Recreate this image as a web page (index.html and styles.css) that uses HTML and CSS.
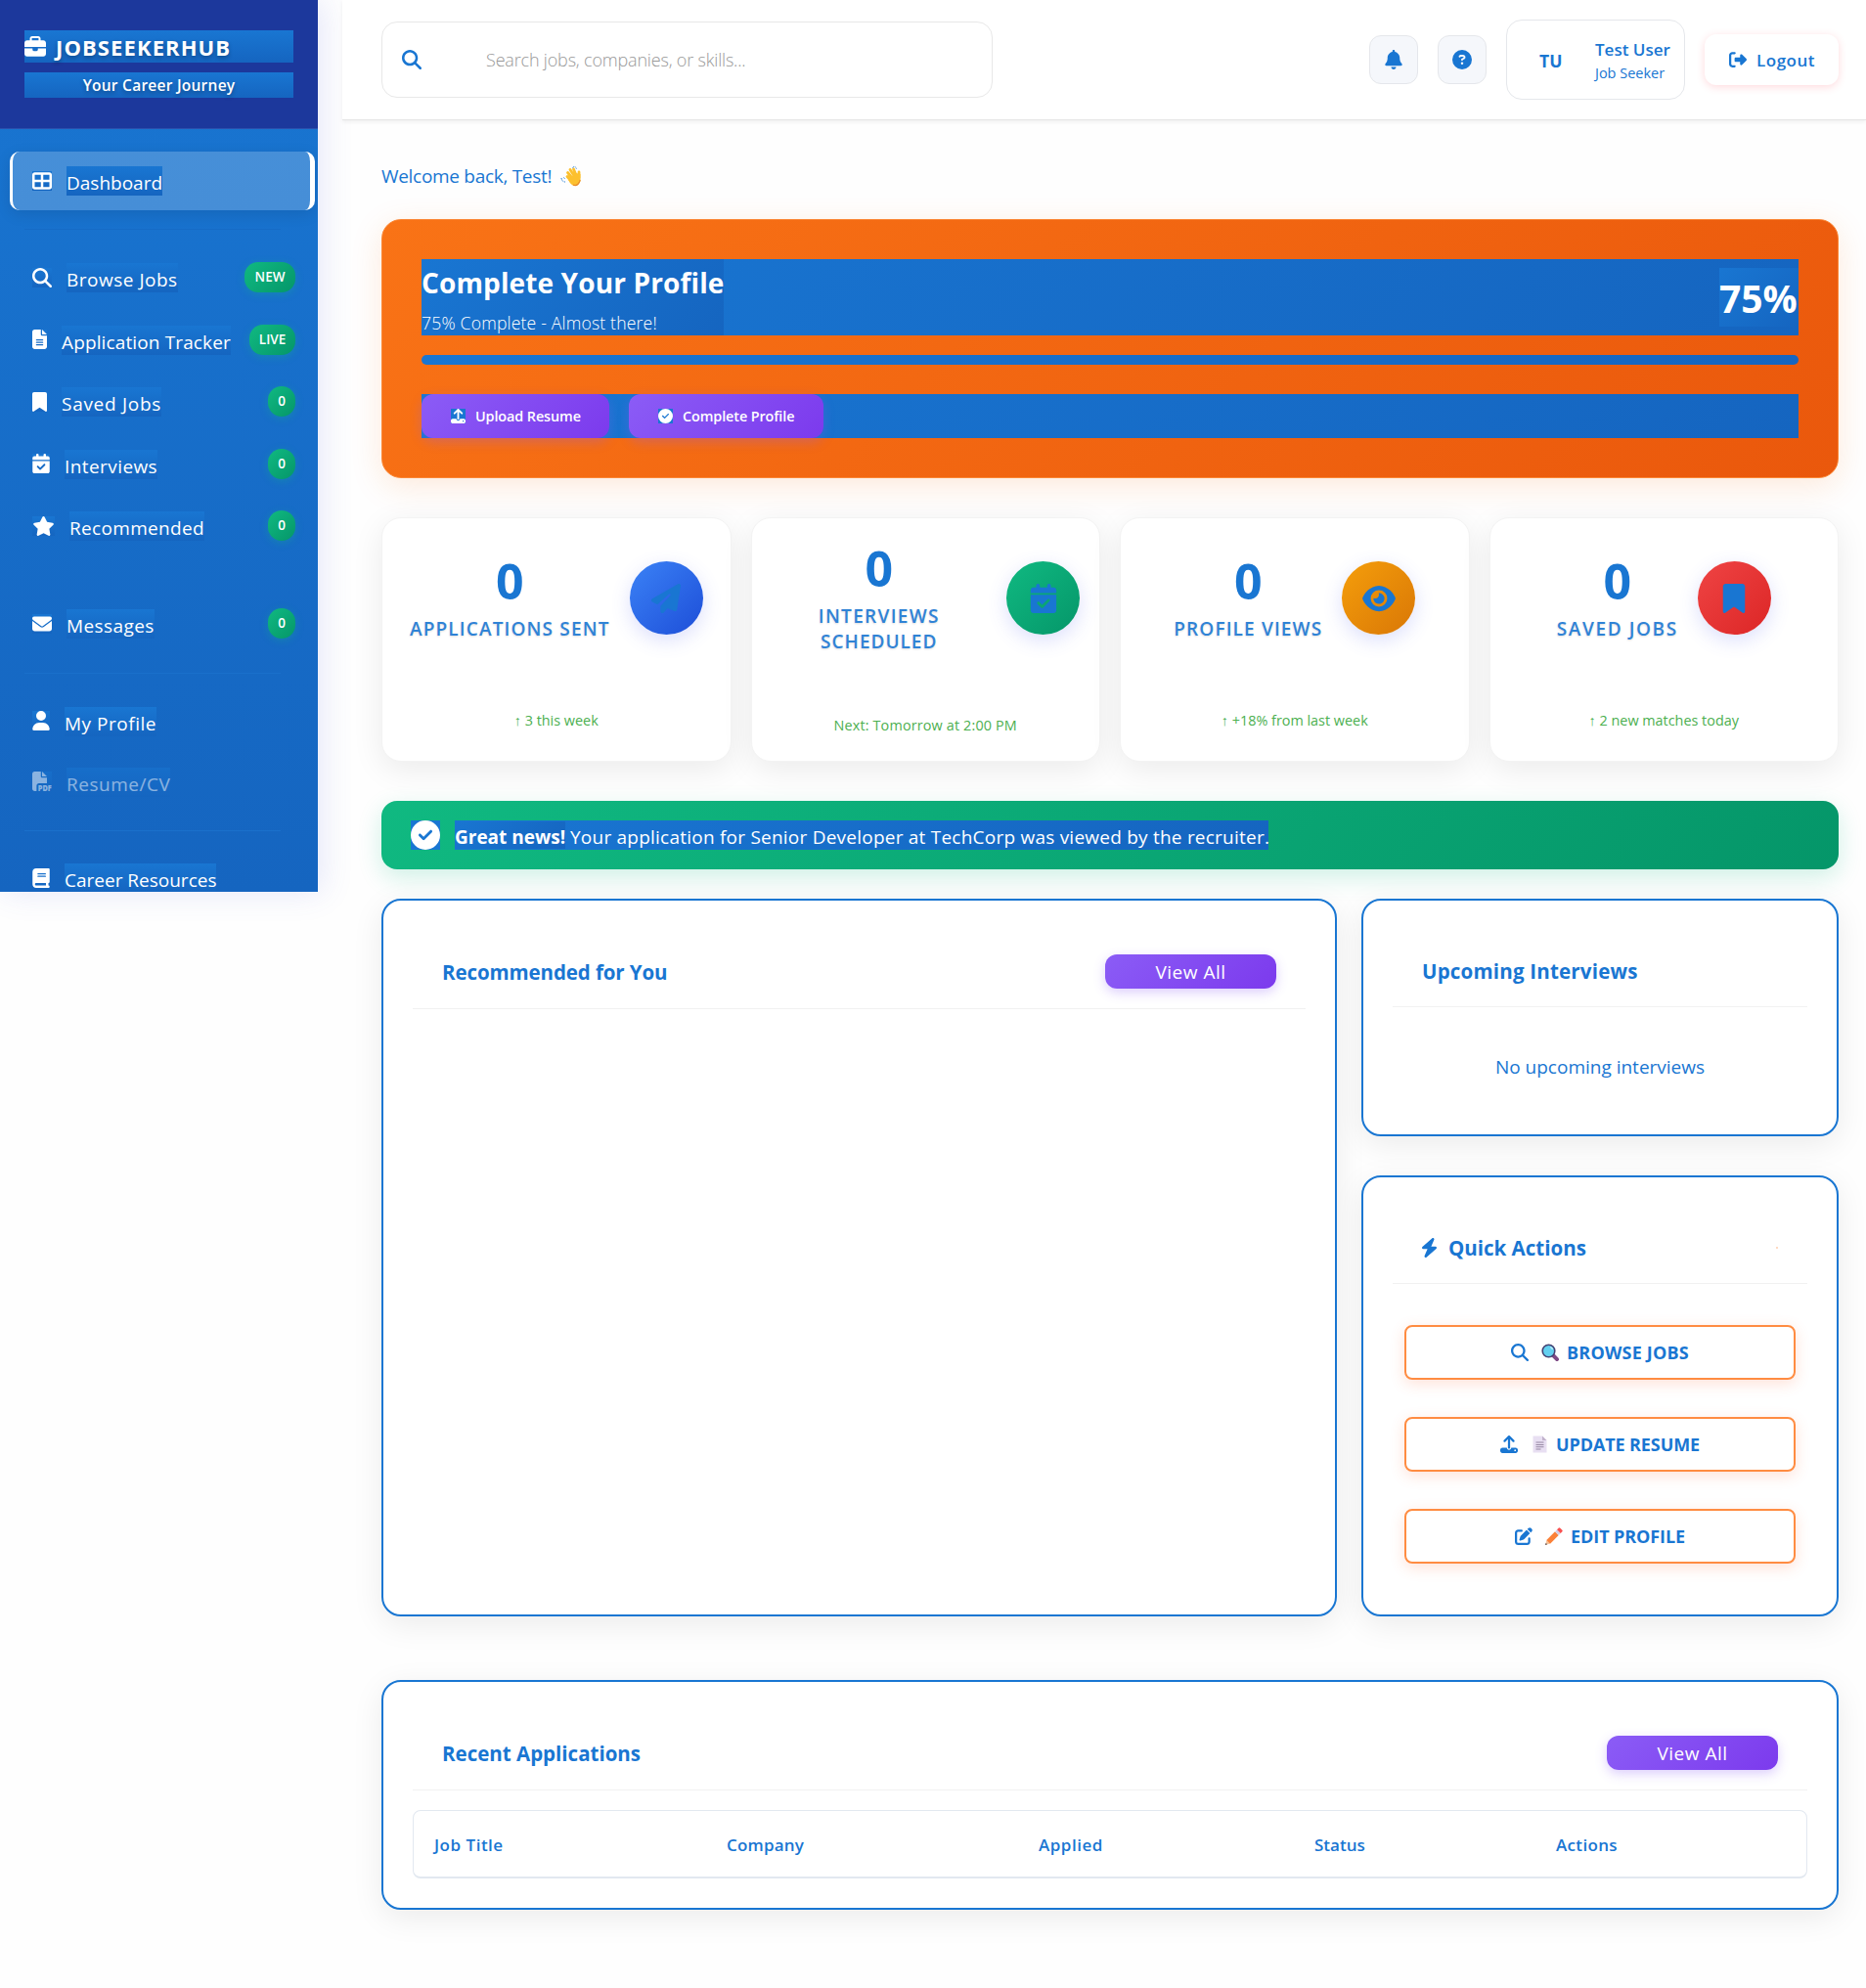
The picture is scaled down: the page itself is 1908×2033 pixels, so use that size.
FILE: index.html
```html
<!DOCTYPE html>
<html lang="en">
<head>
<meta charset="utf-8">
<title>JobSeekerHub – Dashboard</title>
<link rel="stylesheet" href="styles.css">
</head>
<body>
<svg width="0" height="0" class="sprite" aria-hidden="true">
  <symbol id="search" viewBox="0 0 512 512"><path d="M416 208c0 45.9-14.9 88.3-40 122.7L502.6 457.4c12.5 12.5 12.5 32.8 0 45.3s-32.8 12.5-45.3 0L330.7 376c-34.4 25.2-76.8 40-122.7 40C93.1 416 0 322.9 0 208S93.1 0 208 0S416 93.1 416 208zM208 352a144 144 0 1 0 0-288 144 144 0 1 0 0 288z"/></symbol>
  <symbol id="briefcase" viewBox="0 0 512 512"><path d="M184 48H328c4.4 0 8 3.6 8 8V96H176V56c0-4.4 3.6-8 8-8zm-56 8V96H64C28.7 96 0 124.7 0 160v96H192 320 512V160c0-35.3-28.7-64-64-64H384V56c0-30.9-25.1-56-56-56H184c-30.9 0-56 25.1-56 56zM512 288H320v32c0 17.7-14.3 32-32 32H224c-17.7 0-32-14.3-32-32V288H0V416c0 35.3 28.7 64 64 64H448c35.3 0 64-28.7 64-64V288z"/></symbol>
  <symbol id="grid" viewBox="0 0 512 512"><path d="M448 96V224H288V96H448zm0 192V416H288V288H448zM224 224H64V96H224V224zM64 288H224V416H64V288zM64 32C28.7 32 0 60.7 0 96V416c0 35.3 28.7 64 64 64H448c35.3 0 64-28.7 64-64V96c0-35.3-28.7-64-64-64H64z"/></symbol>
  <symbol id="file" viewBox="0 0 384 512"><path d="M64 0C28.7 0 0 28.7 0 64V448c0 35.3 28.7 64 64 64H320c35.3 0 64-28.7 64-64V160H256c-17.7 0-32-14.3-32-32V0H64zM256 0V128H384L256 0zM112 256H272c8.8 0 16 7.2 16 16s-7.2 16-16 16H112c-8.8 0-16-7.2-16-16s7.2-16 16-16zm0 64H272c8.8 0 16 7.2 16 16s-7.2 16-16 16H112c-8.8 0-16-7.2-16-16s7.2-16 16-16zm0 64H272c8.8 0 16 7.2 16 16s-7.2 16-16 16H112c-8.8 0-16-7.2-16-16s7.2-16 16-16z"/></symbol>
  <symbol id="bookmark" viewBox="0 0 384 512"><path d="M0 48V487.7C0 501.1 10.9 512 24.3 512c5 0 9.9-1.5 14-4.4L192 400 345.7 507.6c4.1 2.9 9 4.4 14 4.4c13.4 0 24.3-10.9 24.3-24.3V48c0-26.5-21.5-48-48-48H48C21.5 0 0 21.5 0 48z"/></symbol>
  <symbol id="calendar" viewBox="0 0 448 512"><path d="M128 0c17.7 0 32 14.3 32 32V64H288V32c0-17.7 14.3-32 32-32s32 14.3 32 32V64h48c26.5 0 48 21.5 48 48v48H0V112C0 85.5 21.5 64 48 64H96V32c0-17.7 14.3-32 32-32zM0 192H448V464c0 26.5-21.5 48-48 48H48c-26.5 0-48-21.5-48-48V192zM329 305c9.4-9.4 9.4-24.6 0-33.9s-24.6-9.4-33.9 0l-95 95-47-47c-9.4-9.4-24.6-9.4-33.9 0s-9.4 24.6 0 33.9l64 64c9.4 9.4 24.6 9.4 33.9 0L329 305z"/></symbol>
  <symbol id="star" viewBox="0 0 576 512"><path d="M316.9 18C311.6 7 300.4 0 288.1 0s-23.4 7-28.8 18L195 150.3 51.4 171.5c-12 1.8-22 10.2-25.7 21.7s-.7 24.2 7.9 32.7L137.8 329 113.2 474.7c-2 12 3 24.2 12.9 31.3s23 8 33.8 2.3l128.3-68.5 128.3 68.5c10.8 5.7 23.9 4.9 33.8-2.3s14.9-19.3 12.9-31.3L438.5 329 542.7 225.9c8.6-8.5 11.7-21.2 7.9-32.7s-13.7-19.9-25.7-21.7L381.2 150.3 316.9 18z"/></symbol>
  <symbol id="envelope" viewBox="0 0 512 512"><path d="M48 64C21.5 64 0 85.5 0 112c0 15.1 7.1 29.3 19.2 38.4L236.8 313.6c11.4 8.5 27 8.5 38.4 0L492.8 150.4c12.1-9.1 19.2-23.3 19.2-38.4c0-26.5-21.5-48-48-48H48zM0 176V384c0 35.3 28.7 64 64 64H448c35.3 0 64-28.7 64-64V176L294.4 339.2c-22.8 17.1-54 17.1-76.8 0L0 176z"/></symbol>
  <symbol id="user" viewBox="0 0 448 512"><path d="M224 256A128 128 0 1 0 224 0a128 128 0 1 0 0 256zm-45.7 48C79.8 304 0 383.8 0 482.3C0 498.7 13.3 512 29.7 512H418.3c16.4 0 29.7-13.3 29.7-29.7C448 383.8 368.2 304 269.7 304H178.3z"/></symbol>
  <symbol id="pdf" viewBox="0 0 512 512"><path d="M0 64C0 28.7 28.7 0 64 0H224V128c0 17.7 14.3 32 32 32H384V304H176c-35.3 0-64 28.7-64 64V512H64c-35.3 0-64-28.7-64-64V64zm384 64H256V0L384 128z"/><text x="148" y="508" textLength="356" lengthAdjust="spacingAndGlyphs" font-family="Open Sans, sans-serif" font-weight="800" font-size="205">PDF</text></symbol>
  <symbol id="book" viewBox="0 0 448 512"><path d="M96 0C43 0 0 43 0 96V416c0 53 43 96 96 96H384h32c17.7 0 32-14.3 32-32s-14.3-32-32-32V384c17.7 0 32-14.3 32-32V32c0-17.7-14.3-32-32-32H384 96zm0 384H352v64H96c-17.7 0-32-14.3-32-32s14.3-32 32-32zm32-240c0-8.8 7.2-16 16-16H336c8.8 0 16 7.2 16 16s-7.2 16-16 16H144c-8.8 0-16-7.2-16-16zm16 48H336c8.8 0 16 7.2 16 16s-7.2 16-16 16H144c-8.8 0-16-7.2-16-16s7.2-16 16-16z"/></symbol>
  <symbol id="bell" viewBox="0 0 448 512"><path d="M224 0c-17.7 0-32 14.3-32 32V51.2C119 66 64 130.6 64 208v18.8c0 47-17.3 92.4-48.5 127.6l-7.4 8.3c-8.4 9.4-10.4 22.9-5.3 34.4S19.4 416 32 416H416c12.6 0 24-7.4 29.2-18.9s3.1-25-5.3-34.4l-7.4-8.3C401.3 319.2 384 273.9 384 226.8V208c0-77.4-55-142-128-156.8V32c0-17.7-14.3-32-32-32zm45.3 493.3c12-12 18.7-28.3 18.7-45.3H224 160c0 17 6.7 33.3 18.7 45.3s28.3 18.7 45.3 18.7s33.3-6.7 45.3-18.7z"/></symbol>
  <symbol id="question" viewBox="0 0 512 512"><path d="M256 512A256 256 0 1 0 256 0a256 256 0 1 0 0 512zM169.8 165.3c7.9-22.3 29.1-37.3 52.8-37.3h58.3c34.9 0 63.1 28.3 63.1 63.1c0 22.6-12.1 43.5-31.7 54.8L280 264.4c-.2 13-10.9 23.6-24 23.6c-13.3 0-24-10.7-24-24V250.5c0-8.6 4.6-16.5 12.1-20.8l44.3-25.4c4.7-2.7 7.6-7.7 7.6-13.1c0-8.4-6.8-15.1-15.1-15.1H222.6c-3.4 0-6.4 2.1-7.5 5.3l-.4 1.2c-4.4 12.5-18.2 19-30.6 14.6s-19-18.2-14.6-30.6l.4-1.2zM224 352a32 32 0 1 1 64 0 32 32 0 1 1 -64 0z"/></symbol>
  <symbol id="logout" viewBox="0 0 512 512"><path d="M377.9 105.9L500.7 228.7c7.2 7.2 11.3 17.1 11.3 27.3s-4.1 20.1-11.3 27.3L377.9 406.1c-6.4 6.4-15 9.9-24 9.9c-18.7 0-33.9-15.2-33.9-33.9l0-62.1-128 0c-17.7 0-32-14.3-32-32l0-64c0-17.7 14.3-32 32-32l128 0 0-62.1c0-18.7 15.2-33.9 33.9-33.9c9 0 17.6 3.6 24 9.9zM160 96L96 96c-17.7 0-32 14.3-32 32l0 256c0 17.7 14.3 32 32 32l64 0c17.7 0 32 14.3 32 32s-14.3 32-32 32l-64 0c-53 0-96-43-96-96L0 128C0 75 43 32 96 32l64 0c17.7 0 32 14.3 32 32s-14.3 32-32 32z"/></symbol>
  <symbol id="check" viewBox="0 0 512 512"><path d="M256 512A256 256 0 1 0 256 0a256 256 0 1 0 0 512zM369 209L241 337c-9.4 9.4-24.6 9.4-33.9 0l-64-64c-9.4-9.4-9.4-24.6 0-33.9s24.6-9.4 33.9 0l47 47L335 175c9.4-9.4 24.6-9.4 33.9 0s9.4 24.6 0 33.9z"/></symbol>
  <symbol id="upload" viewBox="0 0 512 512"><path d="M288 109.3V352c0 17.7-14.3 32-32 32s-32-14.3-32-32V109.3l-73.4 73.4c-12.5 12.5-32.8 12.5-45.3 0s-12.5-32.8 0-45.3l128-128c12.5-12.5 32.8-12.5 45.3 0l128 128c12.5 12.5 12.5 32.8 0 45.3s-32.8 12.5-45.3 0L288 109.3zM64 352H192c0 35.3 28.7 64 64 64s64-28.7 64-64H448c35.3 0 64 28.7 64 64v32c0 35.3-28.7 64-64 64H64c-35.3 0-64-28.7-64-64V416c0-35.3 28.7-64 64-64zM432 456a24 24 0 1 0 0-48 24 24 0 1 0 0 48z"/></symbol>
  <symbol id="plane" viewBox="0 0 512 512"><path d="M498.1 5.6c10.1 7 15.4 19.1 13.5 31.2l-64 416c-1.5 9.7-7.4 18.2-16 23s-18.9 5.4-28 1.6L284 427.7l-68.5 74.1c-8.9 9.7-22.9 12.9-35.2 8.1S160 493.2 160 480V396.4c0-4 1.5-7.8 4.2-10.7L331.8 202.8c5.8-6.3 5.6-16-.4-22s-15.7-6.4-22-.7L106 360.8 17.7 316.6C7.1 311.3 .3 300.7 0 288.9s5.9-22.8 16.1-28.7l448-256c10.7-6.1 23.9-5.5 34 1.4z"/></symbol>
  <symbol id="eye" viewBox="0 0 576 512"><path d="M288 32c-80.8 0-145.5 36.8-192.6 80.6C48.6 156 17.3 208 2.5 243.7c-3.3 7.9-3.3 16.7 0 24.6C17.3 304 48.6 356 95.4 399.4C142.5 443.2 207.2 480 288 480s145.5-36.8 192.6-80.6c46.8-43.5 78.1-95.4 93-131.1c3.3-7.9 3.3-16.7 0-24.6c-14.9-35.7-46.2-87.7-93-131.1C433.5 68.8 368.8 32 288 32zM144 256a144 144 0 1 1 288 0 144 144 0 1 1 -288 0zm144-64c0 35.3-28.7 64-64 64c-7.1 0-13.9-1.2-20.3-3.3c-5.5-1.8-11.9 1.6-11.7 7.4c.3 6.9 1.3 13.8 3.2 20.7c13.7 51.2 66.4 81.6 117.6 67.9s81.6-66.4 67.9-117.6c-11.1-41.5-47.8-69.4-88.6-71.1c-5.8-.2-9.2 6.1-7.4 11.7c2.1 6.4 3.3 13.2 3.3 20.3z"/></symbol>
  <symbol id="bolt" viewBox="32 0 384 512"><path d="M349.4 44.6c5.9-13.7 1.5-29.7-10.6-38.5s-28.6-8-39.9 1.8l-256 224c-10 8.8-13.6 22.9-8.9 35.3S50.7 288 64 288H175.5L98.6 467.4c-5.9 13.7-1.5 29.7 10.6 38.5s28.6 8 39.9-1.8l256-224c10-8.8 13.6-22.9 8.9-35.3s-16.6-20.7-30-20.7H272.5L349.4 44.6z"/></symbol>
  <symbol id="edit" viewBox="0 0 512 512"><path d="M471.6 21.7c-21.9-21.9-57.3-21.9-79.2 0L362.3 51.7l97.9 97.9 30.1-30.1c21.9-21.9 21.9-57.3 0-79.2L471.6 21.7zm-299.2 220c-6.1 6.1-10.8 13.6-13.5 21.9l-29.6 88.8c-2.9 8.6-.6 18.1 5.8 24.6s15.9 8.7 24.6 5.8l88.8-29.6c8.2-2.7 15.7-7.4 21.9-13.5L437.7 172.3 339.7 74.3 172.4 241.7zM96 64C43 64 0 107 0 160V416c0 53 43 96 96 96H352c53 0 96-43 96-96V320c0-17.7-14.3-32-32-32s-32 14.3-32 32v96c0 17.7-14.3 32-32 32H96c-17.7 0-32-14.3-32-32V160c0-17.7 14.3-32 32-32h96c17.7 0 32-14.3 32-32s-14.3-32-32-32H96z"/></symbol>
</svg>

<aside class="sidebar">
  <div class="brand">
    <div class="brand-name"><svg class="i22"><use href="#briefcase"/></svg><span>JOBSEEKERHUB</span></div>
    <div class="brand-sub"><span>Your Career Journey</span></div>
  </div>
  <nav class="nav">
    <a class="item active"><svg class="w20"><use href="#grid"/></svg><span class="label">Dashboard</span></a>
    <hr class="rule dark">
    <a class="item badged"><svg class="w20"><use href="#search"/></svg><span class="label t5">Browse Jobs</span><b class="badge wide">NEW</b></a>
    <a class="item badged"><svg class="w15"><use href="#file"/></svg><span class="label t1">Application Tracker</span><b class="badge live">LIVE</b></a>
    <a class="item badged"><svg class="w15"><use href="#bookmark"/></svg><span class="label t7">Saved Jobs</span><b class="badge">0</b></a>
    <a class="item badged"><svg class="w18"><use href="#calendar"/></svg><span class="label t4">Interviews</span><b class="badge">0</b></a>
    <a class="item badged"><svg class="w23"><use href="#star"/></svg><span class="label t3">Recommended</span><b class="badge">0</b></a>
    <hr class="rule none">
    <a class="item badged"><svg class="w20"><use href="#envelope"/></svg><span class="label t4">Messages</span><b class="badge">0</b></a>
    <hr class="rule">
    <a class="item"><svg class="w18"><use href="#user"/></svg><span class="label t5">My Profile</span></a>
    <a class="item muted"><svg class="w20"><use href="#pdf"/></svg><span class="label t5">Resume/CV</span></a>
    <hr class="rule">
    <a class="item"><svg class="w18"><use href="#book"/></svg><span class="label">Career Resources</span></a>
  </nav>
</aside>

<div class="page">
  <header class="topbar">
    <div class="search"><svg class="i20"><use href="#search"/></svg><span class="placeholder">Search jobs, companies, or skills...</span></div>
    <div class="tools">
      <div class="tool"><svg class="i20"><use href="#bell"/></svg></div>
      <div class="tool"><svg class="i20"><use href="#question"/></svg></div>
      <div class="account">
        <div class="avatar">TU</div>
        <div class="who"><div class="who-name">Test User</div><div class="who-role">Job Seeker</div></div>
      </div>
      <div class="logout"><svg class="i18"><use href="#logout"/></svg><span class="t5">Logout</span></div>
    </div>
  </header>

  <main class="content">
    <div class="welcome"><span>Welcome back, Test!</span>
      <svg class="wave" viewBox="0 0 22 22"><path d="M12.5 2.500q3-2.500 4 1.500M14.500 4.500v3M1 13q.5 4 4 4M3.500 12.500l1.500 2" fill="none" stroke="#1976d2" stroke-width="1" stroke-dasharray="1.500 1"/><g fill="none" stroke="#fcc02e" stroke-width="2.800" stroke-linecap="round"><path d="M7 11.500l3.500 4M7.500 7.500l5 6M10 4.500l4.500 7M13.500 4l3 7"/><path d="M19 12.500V7"/></g><path d="M8 15l8-7 4.500 1v7q-1.500 5-5.500 5-4 0-7-6z" fill="#fcc02e"/><path d="M13 20q4 2 6.500-3l.7-2" fill="none" stroke="#e98b2c" stroke-width="1.200"/></svg>
    </div>

    <section class="banner">
      <div class="banner-head">
        <div class="banner-text"><div class="banner-title">Complete Your Profile</div><div class="banner-sub">75% Complete - Almost there!</div></div>
        <div class="banner-pct">75%</div>
      </div>
      <div class="progress"></div>
      <div class="banner-actions">
        <div class="pill"><svg class="i15"><use href="#upload"/></svg><span>Upload Resume</span></div>
        <div class="pill p2"><svg class="i15"><use href="#check"/></svg><span>Complete Profile</span></div>
      </div>
    </section>

    <section class="stats">
      <div class="stat"><div class="stat-row"><div class="stat-text"><div class="num">0</div><div class="cap">APPLICATIONS SENT</div></div><div class="disc blue"><svg class="i30"><use href="#plane"/></svg></div></div><div class="trend">↑ 3 this week</div></div>
      <div class="stat"><div class="stat-row"><div class="stat-text grow"><div class="num">0</div><div class="cap"><span class="t13">INTERVIEWS</span><br><span class="t10">SCHEDULED</span></div></div><div class="disc green"><svg class="i30"><use href="#calendar"/></svg></div></div><div class="trend lower">Next: Tomorrow at 2:00 PM</div></div>
      <div class="stat"><div class="stat-row"><div class="stat-text"><div class="num">0</div><div class="cap">PROFILE VIEWS</div></div><div class="disc amber"><svg class="i34"><use href="#eye"/></svg></div></div><div class="trend">↑ +18% from last week</div></div>
      <div class="stat"><div class="stat-row"><div class="stat-text"><div class="num">0</div><div class="cap t16">SAVED JOBS</div></div><div class="disc red"><svg class="i30"><use href="#bookmark"/></svg></div></div><div class="trend">↑ 2 new matches today</div></div>
    </section>

    <section class="alert"><div class="alert-icon"><svg class="i30"><use href="#check"/></svg></div><div class="alert-text"><strong>Great news!</strong><span class="rest">Your application for Senior Developer at TechCorp was viewed by the recruiter.</span></div></section>

    <section class="panels">
      <div class="card rec"><div class="card-head"><h3 class="tight">Recommended for You</h3><div class="view">View All</div></div></div>
      <div class="side">
        <div class="card upcoming"><div class="card-head"><h3 class="t2">Upcoming Interviews</h3></div><div class="empty">No upcoming interviews</div></div>
        <div class="card quick">
          <div class="card-head"><svg class="w15"><use href="#bolt"/></svg><h3>Quick Actions</h3><i class="dot"></i></div>
          <div class="actions">
            <div class="action"><svg class="i18"><use href="#search"/></svg><svg class="emoji" viewBox="0 0 18 18"><path d="M12.500 12.500l3.500 3.500" stroke="#7f4a86" stroke-width="4" stroke-linecap="square"/><circle cx="7.500" cy="7.500" r="6.300" fill="#63d0f0" stroke="#444273" stroke-width="1.600"/><path d="M9 3.500q2 .5 2.500 2.500" fill="none" stroke="#c9f2fb" stroke-width="1.200"/></svg><span class="t2">BROWSE JOBS</span></div>
            <div class="action"><svg class="i18"><use href="#upload"/></svg><svg class="emoji" viewBox="0 0 18 18"><path d="M2.500 0.500h9.500l4.500 4.500v12.500h-14z" fill="#e8dff2"/><path d="M12 .5v4.500h4.500z" fill="#c2b3cc"/><path d="M5.500 7h8M5.500 9.500h8M5.500 11.700h8M5.500 14h5" stroke="#9687a3"/></svg><span class="tight">UPDATE RESUME</span></div>
            <div class="action"><svg class="i18"><use href="#edit"/></svg><svg class="emoji" viewBox="0 0 18 18"><path d="M0 18l1.500-5 3.500 3.500z" fill="#f3c198"/><path d="M0 18l.7-2 1.400 1.300z" fill="#3d3a45"/><path d="M1.300 13L10 4.300l3.700 3.700L5 16.700z" fill="#fb8138"/><path d="M10 4.300l2-2 3.700 3.700-2 2z" fill="#d3cfe5"/><path d="M12 2.300l1.800-1.800q.8-.6 1.600.2l2 2q.7.8 0 1.500L15.700 6z" fill="#f8514f"/></svg><span class="tight">EDIT PROFILE</span></div>
          </div>
        </div>
      </div>
    </section>

    <section class="card recent">
      <div class="card-head"><h3>Recent Applications</h3><div class="view">View All</div></div>
      <div class="table"><span class="t5">Job Title</span><span class="t2">Company</span><span class="t5">Applied</span><span>Status</span><span class="t3">Actions</span></div>
    </section>
  </main>
</div>
</body>
</html>
```
FILE: styles.css
```css
* { box-sizing: border-box; }
body { margin: 0; display: flex; align-items: flex-start; gap: 25px; width: 1908px; height: 2033px; background: #fefefe; font-family: "Open Sans", "Noto Sans", sans-serif; color: #1976d2; overflow: hidden; }
.sprite { position: absolute; }
svg { fill: currentColor; flex: none; display: block; }
span, h3, strong, .trend, .cap, .who-name { white-space: nowrap; }

/* Icon sizes */
.i15 { width: 15px; height: 15px; }
.i18 { width: 18px; height: 18px; }
.i20 { width: 20px; height: 20px; }
.i22 { width: 22px; height: 22px; }
.i30 { width: 30px; height: 30px; }
.i34 { width: 34px; height: 30px; }
.w15 { width: 15px; height: 20px; }
.w18 { width: 18px; height: 20px; }
.w20 { width: 20px; height: 20px; }
.w23 { width: 23px; height: 20px; }

/* Sidebar */
.sidebar { width: 325px; height: 912px; flex: none; overflow: hidden; color: #fff; background: linear-gradient(180deg, #1976d2, #1565c0); box-shadow: 4px 0 30px rgba(79, 95, 220, .15); }
.brand { height: 132px; padding: 31px 25px 0; background: #1c389c; border-bottom: 1px solid #2b50ad; text-shadow: 0 2px 4px rgba(0, 0, 0, .3); }
.brand-name { height: 33px; display: flex; align-items: center; gap: 10px; background: linear-gradient(#1976d2, #1565c0); font-size: 22px; font-weight: 700; letter-spacing: 1.100px; }
.brand-sub { height: 26px; margin-top: 10px; display: flex; align-items: center; justify-content: center; background: linear-gradient(#1976d2, #1565c0); font-size: 15.500px; font-weight: 600; letter-spacing: .25px; }
.nav { padding: 23px 3px 0 10px; display: flex; flex-direction: column; }
.item { height: 60px; flex: none; margin-bottom: 2px; padding: 0 20px 0 23px; display: flex; align-items: center; font-size: 19px; font-weight: 500; }
.item > svg { margin-bottom: 1px; background: linear-gradient(#1976d2, #1565c0); }
.label { height: 30px; line-height: 34px; margin-left: 15px; background: linear-gradient(#1976d2, #1565c0); }
.badged { height: 61.500px; }
.active { background: rgba(255, 255, 255, .2); border: solid #fff; border-width: 0 5px 0 3px; border-radius: 10px; padding-left: 20px; box-shadow: 0 4px 15px rgba(0, 0, 0, .1); }
.muted > * { opacity: .5; }
.badge { margin: 0 0 1px auto; width: 28px; height: 31px; line-height: 31px; border-radius: 14px; text-align: center; font-size: 13.500px; font-weight: 600; background: linear-gradient(135deg, #10b981, #059669); box-shadow: 0 2px 8px rgba(16, 185, 129, .3); }
.wide { width: 52px; }
.live { width: 47px; }
.rule { height: 1px; flex: none; border: 0; margin: 17px 35px 18.500px 15px; background: #1a70cb; }
.dark { background: #166bc6; }
.none { background: transparent; }

/* Letter tracking */
.t1 { letter-spacing: .13px; }
.t2 { letter-spacing: .2px; }
.t3 { letter-spacing: .33px; }
.t4 { letter-spacing: .42px; }
.t5 { letter-spacing: .51px; }
.t7 { letter-spacing: .71px; }
.t10 { letter-spacing: 1px; }
.t13 { letter-spacing: 1.300px; }
.tight { letter-spacing: -.1px; }

/* Top bar */
.page { flex: 1; min-width: 0; }
.topbar { height: 123px; padding: 0 28px 0 40px; display: flex; align-items: center; justify-content: space-between; background: #fff; border-bottom: 1px solid #e5e5e5; box-shadow: 0 2px 4px rgba(0, 0, 0, .06); }
.search { width: 625px; height: 78px; padding-left: 20px; display: flex; align-items: center; border: 1px solid #e8e8e8; border-radius: 16px; }
.placeholder { margin-left: 66px; color: #999; font-size: 18px; font-weight: 300; letter-spacing: -.18px; }
.tools { display: flex; align-items: center; gap: 20px; }
.tool { width: 50px; height: 50px; display: grid; place-items: center; background: #f5f7fb; border: 1px solid #e5e7eb; border-radius: 12px; }
.account { width: 183px; height: 82px; display: flex; align-items: center; border: 1px solid #e5e7eb; border-radius: 16px; }
.avatar { margin-left: 33px; width: 57px; padding-top: 2px; font-size: 17.500px; font-weight: 700; }
.who { padding-top: 2px; }
.who-name { font-size: 17px; font-weight: 600; line-height: 26px; }
.who-role { font-size: 14.500px; line-height: 22px; }
.logout { width: 137px; height: 52px; padding-left: 25px; display: flex; align-items: center; gap: 10px; border-radius: 12px; font-size: 17px; font-weight: 600; box-shadow: 0 2px 8px rgba(255, 71, 87, .2); }

/* Banner */
.content { padding: 0 28px 0 40px; }
.welcome { height: 101px; padding-top: 12px; display: flex; align-items: center; gap: 9px; font-size: 19px; letter-spacing: -.3px; }
.wave { width: 22px; height: 22px; }
.banner { height: 265px; padding: 40px; border: 1px solid #fb8735; border-radius: 20px; color: #fff; background: linear-gradient(135deg, #f97316, #ea580c); background-origin: border-box; box-shadow: 0 8px 32px rgba(249, 115, 22, .15); }
.banner-head { height: 78px; display: flex; justify-content: space-between; align-items: center; background: linear-gradient(135deg, #1976d2, #1565c0); }
.banner-text { width: 309px; height: 78px; background: linear-gradient(135deg, #1976d2, #1565c0); }
.banner-title { font-size: 28px; font-weight: 700; line-height: 48px; letter-spacing: .13px; white-space: nowrap; }
.banner-sub { font-size: 17.600px; font-weight: 300; line-height: 34px; letter-spacing: .18px; }
.banner-pct { width: 81px; height: 60px; line-height: 62px; font-size: 39px; font-weight: 700; background: linear-gradient(135deg, #1976d2, #1565c0); }
.progress { height: 10px; margin: 20px 0 30px; border-radius: 5px; background: linear-gradient(135deg, #1976d2, #1565c0); }
.banner-actions { height: 45px; display: flex; gap: 20px; background: linear-gradient(135deg, #1976d2, #1565c0); }
.pill { width: 192px; padding-left: 30px; display: flex; align-items: center; gap: 10px; border-radius: 12px; font-size: 14.400px; font-weight: 600; letter-spacing: -.1px; background: linear-gradient(135deg, #8b5cf6, #7c3aed); box-shadow: 0 4px 12px rgba(139, 92, 246, .3); }
.pill svg { background: #1976d2; }
.p2 { width: 199px; }

/* Statistics */
.stats { margin-top: 40px; display: grid; grid-template-columns: repeat(4, 1fr); gap: 20px; }
.stat { height: 250px; padding: 0 20px; background: #fff; border: 1px solid #f3f3f3; border-radius: 20px; box-shadow: 0 8px 32px rgba(0, 0, 0, .08); }
.stat-row { height: 163px; display: flex; align-items: center; justify-content: center; gap: 20px; }
.stat-text { text-align: center; }
.grow { flex: 1; }
.num { padding-bottom: 10px; font-size: 50px; font-weight: 700; line-height: 52px; }
.cap { font-size: 19px; font-weight: 600; line-height: 26px; letter-spacing: 1.150px; opacity: .9; text-shadow: 0 1px 2px rgba(0, 0, 0, .15); }
.t16 { letter-spacing: 1.600px; }
.disc { width: 75px; height: 75px; flex: none; display: grid; place-items: center; border-radius: 50%; box-shadow: 0 6px 20px rgba(79, 95, 240, .2); }
.blue { background: linear-gradient(135deg, #3b82f6, #1d4ed8); }
.green { background: linear-gradient(135deg, #10b981, #059669); }
.amber { background: linear-gradient(135deg, #f59e0b, #d97706); }
.red { background: linear-gradient(135deg, #ef4444, #dc2626); }
.trend { padding-top: 33px; text-align: center; color: #4caf50; font-size: 14.400px; font-weight: 500; line-height: 22px; }
.lower { padding-top: 38px; letter-spacing: .15px; }

/* Alert */
.alert { height: 70px; margin-top: 40px; padding: 20px 30px; display: flex; gap: 15px; color: #fff; border-radius: 16px; background: linear-gradient(135deg, #10b981, #059669); box-shadow: 0 8px 25px rgba(16, 185, 129, .2); }
.alert-icon { background: #1976d2; }
.alert-text { height: 30px; width: 832px; display: flex; align-items: center; gap: 5px; font-size: 19px; font-weight: 500; background: linear-gradient(135deg, #1976d2, #1565c0); }
.alert-text strong { height: 28px; width: 113px; line-height: 32px; font-weight: 700; background: linear-gradient(135deg, #1976d2, #1565c0); }
.rest { height: 28px; line-height: 32px; letter-spacing: .23px; }

/* Cards */
.card { background: #fff; border: 2px solid #1976d2; border-radius: 20px; padding: 30px; box-shadow: 0 8px 32px rgba(0, 0, 0, .08); }
.panels { margin-top: 30px; display: grid; grid-template-columns: 977px 1fr; gap: 25px; }
.side { display: flex; flex-direction: column; gap: 40px; }
.upcoming { height: 243px; }
.quick { height: 451px; }
.card-head { height: 81px; padding: 5px 30px 0; display: flex; align-items: center; border-bottom: 1px solid #f1f1f1; }
.side .card-head { height: 79px; }
.card-head h3 { margin: 0; padding-top: 1px; font-size: 20.500px; font-weight: 700; }
.view { margin-left: auto; width: 175px; height: 35px; line-height: 37px; text-align: center; border-radius: 12px; color: #fff; font-size: 19px; letter-spacing: .5px; background: linear-gradient(135deg, #8b5cf6, #7c3aed); box-shadow: 0 4px 12px rgba(139, 92, 246, .3); }
.quick h3 { margin-left: 12px; }
.dot { width: 2px; height: 2px; margin-left: auto; background: #ffd9c2; }
.empty { height: 124px; line-height: 123px; text-align: center; font-size: 19px; }
.actions { padding: 42px 12px 0; display: flex; flex-direction: column; gap: 38px; }
.action { height: 56px; display: flex; align-items: center; justify-content: center; border: 2px solid #ff8c42; border-radius: 8px; font-size: 18px; font-weight: 700; box-shadow: 0 4px 15px rgba(255, 107, 53, .2); }
.emoji { width: 18px; height: 18px; margin: 0 8px 0 13px; }
.recent { height: 235px; margin-top: 65px; }
.table { height: 70px; margin-top: 20px; padding: 2px 0 0 21px; display: grid; grid-template-columns: 299px 319px 282px 247px 1fr; align-items: center; font-size: 17px; font-weight: 600; border: 1px solid #e2e8f0; border-bottom-width: 2px; border-radius: 8px; }
```
